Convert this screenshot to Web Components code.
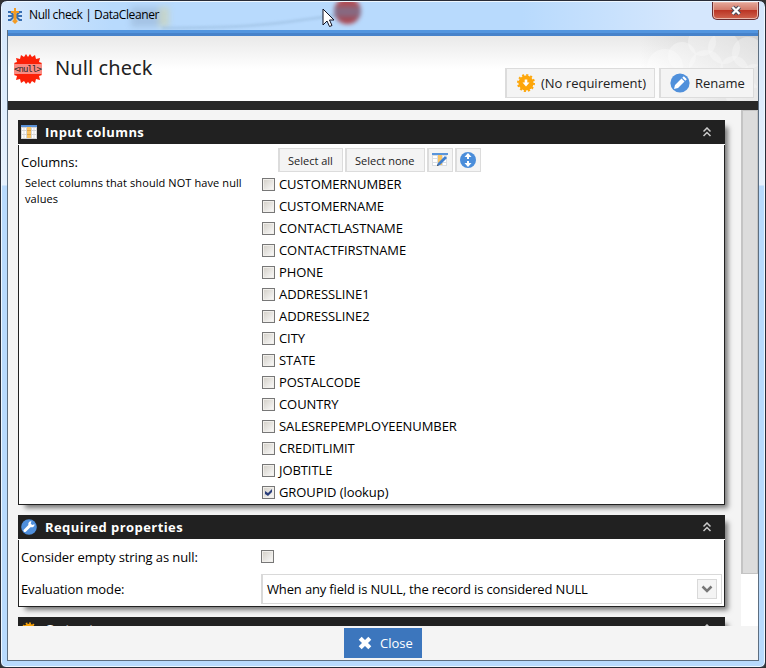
<!DOCTYPE html>
<html lang="en"><head><meta charset="utf-8"><title>Null check | DataCleaner</title>
<style>body{margin:0;background:#333;overflow:hidden;font-family:"Open Sans","Noto Sans",sans-serif;font-size:13px;color:#000}</style>
</head><body>
<dc-window></dc-window>
<script>
const icons={
app:`<svg width="14" height="16" viewBox="0 0 14 16"><path d="M0 4h2.500l2.500 2.500v3L2.500 12H0M0 8h4M14 4h-2.500L9 6.500v3l2.500 2.500H14M14 8h-4" fill="none" stroke="#386fb2" stroke-width="2"/><path d="M6 0h2v3h3v2H8.500v7l1.500 1-3 3-3-3 1.500-1V5H3V3h3z" fill="#f39b24"/></svg>`,
nul:`<svg width="30" height="30" viewBox="0 0 30 30"><path d="M15 3l2-3 2 3 3-2 1 4 4-1-1 4 3 1-2 3v6l2 3-3 1 1 4-4-1-1 4-3-2-2 3-2-2-2 2-2-3-3 2-1-4-4 1 1-4-3-1 2-3v-6l-2-3 3-1-1-4 4 1 1-4 3 2 2-3z" fill="#fb2108"/><path d="M1 10h28v10H1z" fill="#fa8b82"/><text x="1" y="18.200" textLength="28" font-family="DejaVu Sans Mono,monospace" font-size="9" fill="#292929">&lt;null&gt;</text></svg>`,
gear:`<svg width="18" height="18" viewBox="0 0 18 18"><circle cx="9" cy="9" r="7.600" fill="#fda60a"/><circle cx="9" cy="9" r="8" fill="none" stroke="#fda60a" stroke-width="2" stroke-dasharray="2.100 2.088"/><path d="M7.700 5.500h2.600v3h2.200L9 12.500 5.500 8.500h2.200z" fill="#fff"/></svg>`,
gearsmall:`<svg width="16" height="16" viewBox="0 0 18 18"><circle cx="9" cy="10" r="7" fill="#fda60a"/><circle cx="9" cy="10" r="7.500" fill="none" stroke="#fda60a" stroke-width="2" stroke-dasharray="1.960 1.967"/><path d="M7.700 6.500h2.600v3h2.200L9 13.500 5.500 9.500h2.200z" fill="#fff"/></svg>`,
pencil:`<svg width="20" height="20" viewBox="0 0 20 20"><circle cx="10" cy="10" r="9.600" fill="#5090db"/><path d="M4 16l1-4 6.500-6.500 3 3L8 15zM12.300 4.700l1.500-1.500 3 3-1.500 1.500z" fill="#fff"/></svg>`,
table:`<svg width="16" height="14" viewBox="0 0 16 14"><path d="M0 0h16v14H0z" fill="#d5d5d5"/><path d="M0 0h16v2H0z" fill="#5990d5"/><path d="M1 3h4v2H1zm0 3h4v3H1zm0 4h4v3H1zM11 3h4v2h-4zm0 3h4v3h-4zm0 4h4v3h-4z" fill="#fff"/><path d="M3 3v10M13 3v10" stroke="#ddd"/><path d="M6 2h4v11H6z" fill="#fac463"/><path d="M6 5.500h4M6 9.500h4" stroke="#e3a545"/></svg>`,
edit:`<svg width="16" height="14" viewBox="0 0 16 14"><path d="M0 1h15v12H0z" fill="#d9dde2"/><path d="M0 0h16v2H0z" fill="#5995db"/><path d="M1 3h4v2H1zm0 3h4v3H1zm0 4h4v2H1zM11 3h3v2h-3zm0 3h3v3h-3zm0 4h3v2h-3z" fill="#fff"/><path d="M6 2h4v10H6z" fill="#fac463"/><path d="M5 13l1-3 7-7 2 2-7 7z" fill="#3f7fce"/><path d="M5 13l.5-1.600L7 12z" fill="#333"/></svg>`,
updown:`<svg width="16" height="16" viewBox="0 0 16 16"><circle cx="8" cy="8" r="8" fill="#4a8dda"/><path d="M8 1l3.500 4H9v2H7V5H4.500zM8 15l3.500-4H9V9H7v2H4.500z" fill="#fff"/></svg>`,
wrench:`<svg width="16" height="16" viewBox="0 0 16 16"><circle cx="8" cy="8" r="7.800" fill="#4f8fdc"/><path d="M13.500 5.200l-2.300.8-1.500-1.500.8-2.300C8.500 1.800 6.700 3.800 7.400 6L2.500 11c-.6.8.9 2.600 2 2l5-4.800c2.200.6 4.300-1 4-3z" fill="#fff"/></svg>`,
chev:`<svg width="8" height="10" viewBox="0 0 8 10"><path d="M.5 4.500L4 1l3.500 3.500M.5 9L4 5.500 7.500 9" fill="none" stroke="#ccc" stroke-width="1.500"/></svg>`,
close:`<svg width="14" height="14" viewBox="0 0 14 14"><path d="M2.200 2.200l9.600 9.600M11.800 2.200l-9.600 9.600" stroke="#fff" stroke-width="4.200"/></svg>`
};
const define=(name,html,fn)=>customElements.define(name,class extends HTMLElement{
 connectedCallback(){const r=this.attachShadow({mode:'open'});const t=document.createElement('template');t.innerHTML=html;r.append(t.content.cloneNode(true));if(fn)fn(this,r)}});
define('dc-icon','<style>:host{display:inline-flex;flex:none}svg{display:block}</style>',(e,r)=>{r.innerHTML+=icons[e.getAttribute('name')]});
define('dc-button',`<style>:host{display:flex;box-sizing:border-box;align-items:center;background:#f4f4f4;border:1px solid #dcdcdc;border-left-width:2px;color:#222;white-space:nowrap}</style><slot></slot>`);
define('dc-check',`<style>:host{display:flex;height:22px;align-items:center;gap:4px;white-space:nowrap;letter-spacing:-.08px}
i{box-sizing:border-box;width:13px;height:13px;border:1px solid #777;background:linear-gradient(135deg,#d2cec6,#fbfbfb);box-shadow:inset 0 0 0 1px #f1efeb;display:block}svg{display:block}span{line-height:22px}</style><i></i><span><slot></slot></span>`,(e,r)=>{if(e.hasAttribute('checked'))r.querySelector('i').innerHTML='<svg width="11" height="11" viewBox="0 0 11 11"><path d="M2 4l3 2 4-4v3L5 9 2 7z" fill="#2a3e7b"/></svg>'});
define('dc-panel',`<style>:host{display:block;box-sizing:border-box;width:707px;background:#fff;box-shadow:5px 5px 5px -2px #777;flex:none}
header{height:24px;background:#212121;background-clip:padding-box;color:#fff;display:flex;align-items:center;padding:0 14px 0 3px;font-weight:700;border-bottom:1px solid #fff}
h2{font-size:13px;letter-spacing:.43px;margin:0 auto 0 8px}
section{box-sizing:border-box;height:var(--body);border:1px solid #222;border-top:0}</style>
<header><slot name="icon"></slot><h2></h2><dc-icon name="chev"></dc-icon></header><section><slot></slot></section>`,(e,r)=>{r.querySelector('h2').textContent=e.getAttribute('heading')});
define('dc-titlebar',`<style>:host{display:flex;height:28px;align-items:flex-start;background:linear-gradient(90deg,#d6e8fc 0,#b8dafd 110px,#b8dafd 520px,#d5e7fd 680px);position:relative;font-size:12px}
dc-icon{margin:6px 0 0 6px}.t{margin:4px 0 0 7px;line-height:17px;letter-spacing:-.4px;z-index:1}
.close{margin:0 5px 0 auto;width:47px;height:18px;box-sizing:border-box;border:1px solid #672d31;border-top:0;border-radius:0 0 5px 5px;background:linear-gradient(#e6a99b 0,#d27867 48%,#bb3525 50%,#cf6550);display:flex;justify-content:center;align-items:center;box-shadow:inset 0 0 0 1px #eab8ac}
.g{position:absolute}.ghost{left:129px;top:5px;width:38px;height:20px;filter:blur(3px);background:linear-gradient(90deg,#8fa9c8 75%,#d9d08d 75%);opacity:.45}.red{left:332px;top:-4px;width:27px;height:26px;border-radius:50%;background:linear-gradient(#b34a50 20%,#856b84 45%,#856b84 58%,#b4393e);filter:blur(2px)}.clip{inset:0;overflow:hidden}</style>
<div class="g clip"><div class="g ghost"></div><svg class="g" style="left:160px;top:9px;filter:blur(1px)" width="180" height="20"><path d="M0 17C80 17 110 14 175 4" fill="none" stroke="#8daed0" stroke-width="3" opacity=".35"/></svg><div class="g red"></div></div>
<dc-icon name="app"></dc-icon><div class="t">Null check | DataCleaner</div>
<svg class="g" style="left:320px;top:6px" width="14" height="20" viewBox="0 0 14 20"><path d="M1 1v16l4-4 2.500 5.500 2.500-1L7.500 12H12z" fill="#fff" stroke="#101020"/></svg>
<div class="close"><svg width="12" height="11" viewBox="0 0 12 11"><path d="M2.500 2l7 7M9.500 2l-7 7" stroke="#444a5c" stroke-width="4.200"/><path d="M2.500 2l7 7M9.500 2l-7 7" stroke="#fff" stroke-width="2.300"/></svg></div>`);
define('dc-banner',`<style>:host{display:flex;height:65px;background:linear-gradient(#e9e9e9,#fff 33px);position:relative;font-size:13px}
.logo{margin:18px 0 0 5px}h1{font:400 20px/28px "Noto Sans","Open Sans",sans-serif;color:#222;margin:18px auto 0 12px;letter-spacing:.1px}
dc-button{height:30px;margin-top:32px;position:relative}.b{position:absolute;right:0;top:0}</style>
<svg class="b" width="118" height="65"><defs><linearGradient id="f"><stop stop-color="#aaa" stop-opacity="0"/><stop offset="1" stop-color="#aaa" stop-opacity=".4"/></linearGradient></defs><path d="M0 0h118v66H0z" fill="url(#f)"/><g fill="#fff" opacity=".75"><g fill-opacity=".45"><circle cx="62" cy="6" r="14"/><circle cx="84" cy="12" r="16"/><circle cx="108" cy="17" r="16"/><circle cx="42" cy="20" r="14"/><circle cx="94" cy="34" r="14"/><circle cx="66" cy="31" r="17"/><circle cx="25" cy="31" r="18"/><circle cx="114" cy="40" r="12"/><circle cx="103" cy="60" r="17"/><circle cx="20" cy="60" r="22"/></g></g></svg>
<dc-icon class="logo" name="nul"></dc-icon><h1>Null check</h1>
<dc-button style="width:150px;padding-left:10px;gap:6px"><dc-icon name="gear"></dc-icon>(No requirement)</dc-button>
<dc-button style="width:95px;padding-left:9px;gap:5px;margin-left:4px;margin-right:4px"><dc-icon name="pencil"></dc-icon>Rename</dc-button>`);
define('dc-columns',`<style>:host{display:grid;grid-template-columns:243px 1fr}.l{padding:7px 0 0 2px;line-height:20px}.d{font-size:11px;line-height:16px;padding:3px 12px 0 4px;letter-spacing:.09px}
.bar{display:flex;padding:3px 0 1px 16px;gap:2px;font-size:11px}dc-button{height:24px;padding-left:8px}</style>
<div class="l">Columns:<div class="d">Select columns that should NOT have null values</div></div><div><div class="bar"><dc-button style="width:65px">Select all</dc-button><dc-button style="width:80px">Select none</dc-button><dc-button style="width:26px;padding-left:3px"><dc-icon name="edit"></dc-icon></dc-button><dc-button style="width:26px;padding-left:3px"><dc-icon name="updown"></dc-icon></dc-button></div><div class="list"></div></div>`,(e,r)=>{const l=r.querySelector('.list');'CUSTOMERNUMBER,CUSTOMERNAME,CONTACTLASTNAME,CONTACTFIRSTNAME,PHONE,ADDRESSLINE1,ADDRESSLINE2,CITY,STATE,POSTALCODE,COUNTRY,SALESREPEMPLOYEENUMBER,CREDITLIMIT,JOBTITLE,GROUPID (lookup)'.split(',').forEach((s,i)=>{const c=document.createElement('dc-check');c.textContent=s;if(i==14)c.setAttribute('checked','');l.append(c)})});
define('dc-properties',`<style>:host{display:grid;grid-template-columns:242px 1fr;grid-template-rows:33px 31px;align-items:center;letter-spacing:-.1px}span{padding-left:2px}
.s{height:30px;box-sizing:border-box;border:1px solid #d9d9d9;border-left-width:2px;display:flex;align-items:center;justify-content:space-between;padding:0 4px;margin-right:2px;white-space:nowrap;letter-spacing:-.15px}.d{box-sizing:border-box;width:20px;height:20px;border:1px solid #d9d9d9;background:#f4f4f4;display:grid;place-items:center}</style>
<span>Consider empty string as null:</span><dc-check></dc-check><span>Evaluation mode:</span><div class="s">When any field is NULL, the record is considered NULL<div class="d"><svg width="12" height="8"><path d="M1.500 1.500L6 6l4.500-4.500" fill="none" stroke="#777" stroke-width="2.500"/></svg></div></div>`);
define('dc-window',`<style>:host{display:flex;flex-direction:column;box-sizing:border-box;width:766px;height:668px;border:1px solid #282c38;border-radius:7px 7px 6px 6px;overflow:hidden;background:linear-gradient(#d3e6fb 0,#e6f1fd 184px,#b8dafd 185px);box-shadow:inset 0 0 0 1px #eef7ff;padding:1px}
.client{margin:-1px 5px 0;height:632px;border:1px solid #5d6e80;background:#f4f4f4;display:flex;flex-direction:column;box-sizing:border-box}.blue{height:6px;flex:none;background:linear-gradient(#5295df 50%,#4682ca 50%)}.dark{height:9px;background:#282828;flex:none}
.scroll{display:flex;height:516px;overflow:hidden;flex:none}.content{display:flex;flex-direction:column;gap:10px;padding:10px 16px 0 10px;width:733px;box-sizing:border-box}
.bar{width:17px;background:#fff}.thumb{height:464px;background:#dcdcdc;border:1px solid #c4c4c4;box-sizing:border-box;border-left-width:2px}
.foot{display:flex;justify-content:center;padding-top:2px}.foot dc-button{background:#3c76bd;border:0;color:#fff;width:78px;height:30px;padding-left:14px;gap:8px}</style>
<dc-titlebar></dc-titlebar><div class="client"><div class="blue"></div><dc-banner></dc-banner><div class="dark"></div>
<div class="scroll"><div class="content"><dc-panel heading="Input columns" style="--body:360px"><dc-icon slot="icon" name="table"></dc-icon><dc-columns></dc-columns></dc-panel>
<dc-panel heading="Required properties" style="--body:67px"><dc-icon slot="icon" name="wrench"></dc-icon><dc-properties></dc-properties></dc-panel>
<dc-panel heading="Output" style="--body:30px"><dc-icon slot="icon" name="gearsmall"></dc-icon></dc-panel></div><div class="bar"><div class="thumb"></div></div></div>
<div class="foot"><dc-button><dc-icon name="close"></dc-icon>Close</dc-button></div></div>`);
</script></body></html>
